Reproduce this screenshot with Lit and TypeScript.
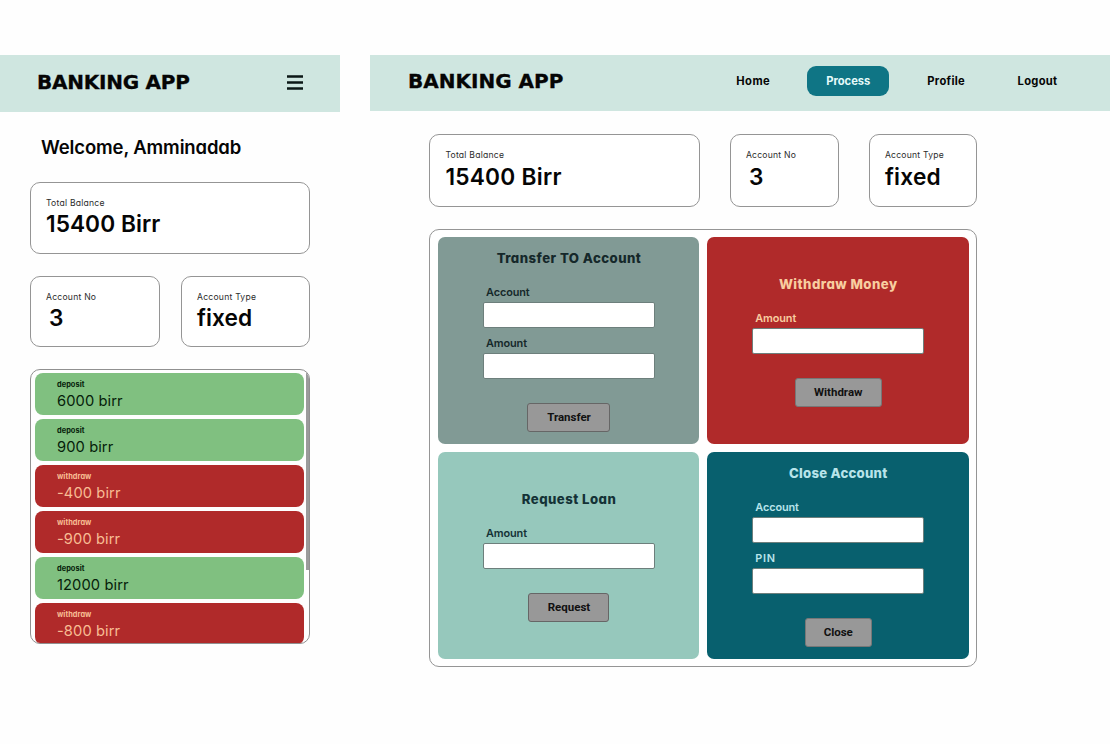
import { LitElement, html, css } from "lit";
import { customElement } from "lit/decorators.js";

const entries: [string, string][] = [
  ["deposit", "6000 birr"],
  ["deposit", "900 birr"],
  ["withdraw", "-400 birr"],
  ["withdraw", "-900 birr"],
  ["deposit", "12000 birr"],
  ["withdraw", "-800 birr"],
];

@customElement("app-root")
export class AppRoot extends LitElement {
  static styles = css`
    :host { display: block; width: 1110px; height: 744px; overflow: hidden; background: #fefefe;
      font-family: Inter, sans-serif; font-feature-settings: "cv11"; color: #050505; white-space: nowrap; }
    * { box-sizing: border-box; }
    .screens { display: flex; gap: 30px; padding-top: 55px; }
    .phone { width: 340px; }
    .desk { width: 740px; }
    .bar { display: flex; align-items: center; justify-content: space-between; background: #cfe6e0; }
    .phone .bar { height: 57px; padding: 0 37px 3px 37px; }
    .desk .bar { height: 56px; padding: 0 52.5px 4px 38px; }
    .logo { font: bold 20px/24px "DejaVu Sans", sans-serif; -webkit-text-stroke: 0.3px #050505; }
    .phone .logo { letter-spacing: -0.25px; }
    .menu { width: 16px; height: 15px; display: block; }
    nav { display: flex; }
    .link { font-weight: 750; font-size: 11.2px; line-height: 30px; letter-spacing: 0.3px; }
    .link.process { width: 82px; text-align: center; background: #0f7585; color: #e6fbfb; border-radius: 9px;
      margin: 0 38px 0 37px; letter-spacing: 0; }
    .link.logout { margin: 0 0 0 52.5px; }
    .link.home { letter-spacing: 0.5px; }
    .hello { font-size: 18.5px; font-weight: 600; line-height: 24px; letter-spacing: -0.14px; margin: 23px 0 0 41px; }
    .cards { display: flex; }
    .phone .cards { margin: 22px 0 0 30px; gap: 21px; }
    .phone .hello + .cards { margin-top: 23px; }
    .desk .cards { margin: 23px 0 0 59.4px; gap: 30px; }
    .card { border: 1px solid #959595; border-radius: 10px; padding: 14px 15px 0; background: #fff; }
    .phone .card { height: 71.5px; }
    .desk .card { height: 72.5px; }
    .cap { font-size: 8.6px; line-height: 12px; letter-spacing: 0.23px; color: #2c2c2c; }
    .val { font-size: 22.7px; line-height: 28px; font-weight: 570; letter-spacing: 0.05px; margin-top: 1px; }
    .desk .val { letter-spacing: 0.25px; margin-top: 2px; }
    .list { margin: 22px 30px 0; height: 274.5px; border: 1px solid #909090; border-radius: 10px; overflow: hidden;
      position: relative; padding: 3px 5px 0 4px; display: flex; flex-direction: column; gap: 4px; }
    .thumb { position: absolute; right: -1px; top: -1px; width: 4px; height: 201px; background: #9b9b9b; }
    .row { flex: none; height: 42px; border-radius: 8px; padding: 6px 22px 0; background: #80c080; color: #06200a; }
    .row.withdraw { background: #b02a2a; color: #f8bd94; }
    .kind { font-size: 7.4px; line-height: 12px; font-weight: 700; letter-spacing: 0.05px; }
    .sum { font-size: 14.7px; line-height: 21px; letter-spacing: 0.09px; }
    .panel { margin: 22.4px 0 0 59.4px; width: 547.6px; height: 438px; border: 1px solid #959595; border-radius: 10px;
      padding: 7px 7px 7px 7.6px; display: grid; grid-template-columns: 1fr 1fr; grid-template-rows: 1fr 1fr; gap: 8px; background: #fff; }
    .tile { border-radius: 7px; display: flex; flex-direction: column; align-items: center; justify-content: center; }
    .grey, .mint { padding-left: 0.5px; }
    .red, .mint { padding-top: 1px; }
    .grey { background: #819a95; color: #15282a; }
    .red { background: #b02a2a; color: #f8cda0; }
    .mint { background: #96c8bc; color: #143236; }
    .teal { background: #08606e; color: #b8e4ea; }
    .title { font-size: 13.2px; line-height: 18px; font-weight: 800; letter-spacing: 0.45px; margin-bottom: 10px; }
    .teal .title { letter-spacing: 0.22px; }
    .label { width: 166px; font-size: 10.9px; line-height: 16px; font-weight: 600; letter-spacing: -0.1px; margin: 7px 0 2px; }
    .label.pin { letter-spacing: 0.7px; }
    .field { width: 172px; height: 26px; background: #fff; border: 1px solid #6d7f7c; border-radius: 2px; }
    .btn { margin-top: 24px; height: 29px; border: 1px solid #666; border-radius: 3px; background: #989898;
      color: #111; font: bold 11.5px/27px Roboto, sans-serif; text-align: center; }
    .red .btn, .teal .btn { border-color: #777; }
    .shift { padding-left: 3px; }
  `;

  card(cap: string, val: string, w: number) {
    return html`<div class="card" style="width:${w}px"><div class="cap">${cap}</div>
      <div class="val ${val.length === 1 ? "shift" : ""}">${val}</div></div>`;
  }

  tile(cls: string, title: string, labels: string[], btn: string, w: number) {
    return html`<section class="tile ${cls}"><div class="title">${title}</div>
      ${labels.map((l) => html`<div class="label ${l.toLowerCase()}">${l}</div><div class="field"></div>`)}
      <div class="btn" style="width:${w}px">${btn}</div></section>`;
  }

  render() {
    return html`<div class="screens">
      <div class="phone">
        <div class="bar"><div class="logo">BANKING APP</div>
          <svg class="menu" viewBox="0 0 16 15"><path d="M0 1.5H16M0 7.5H16M0 13.5H16" stroke="#0b1716" stroke-width="2.4"/></svg></div>
        <div class="hello">Welcome, Amminadab</div>
        <div class="cards">${this.card("Total Balance", "15400 Birr", 280)}</div>
        <div class="cards">${this.card("Account No", "3", 130)}${this.card("Account Type", "fixed", 129)}</div>
        <div class="list">${entries.map(([k, s]) => html`<div class="row ${k}"><div class="kind">${k}</div><div class="sum">${s}</div></div>`)}
          <div class="thumb"></div></div>
      </div>
      <div class="desk">
        <div class="bar"><div class="logo">BANKING APP</div><nav>
          ${["Home", "Process", "Profile", "Logout"].map((n) => html`<div class="link ${n.toLowerCase()}">${n}</div>`)}</nav></div>
        <div class="cards">${this.card("Total Balance", "15400 Birr", 270.5)}${this.card("Account No", "3", 109)}${this.card("Account Type", "fixed", 108.5)}</div>
        <div class="panel">
          ${this.tile("grey", "Transfer TO Account", ["Account", "Amount"], "Transfer", 83)}
          ${this.tile("red", "Withdraw Money", ["Amount"], "Withdraw", 87)}
          ${this.tile("mint", "Request Loan", ["Amount"], "Request", 81)}
          ${this.tile("teal", "Close Account", ["Account", "PIN"], "Close", 67)}
        </div>
      </div>
    </div>`;
  }
}
